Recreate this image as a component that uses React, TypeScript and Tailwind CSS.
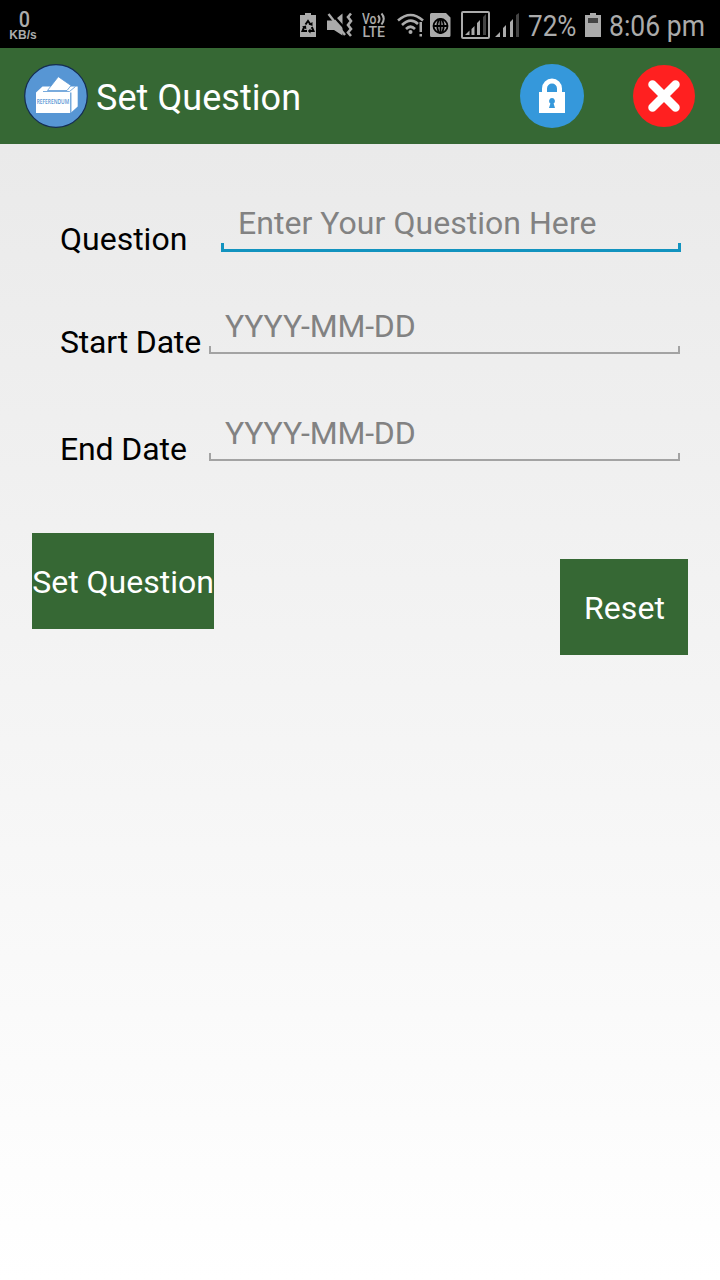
import { FC, ReactNode } from "react";

const BatterySaverIcon: FC = () => (
    <svg viewBox="0 0 16 48" className="h-12 w-4">
        <path d="M5 13h6v2h5v22H0V15h5z" fill="#ababab" />
        <g fill="none" stroke="#000" strokeWidth="2">
            <path d="M5.5 24.5L8 21l2.5 3.5" />
            <path d="M11.8 27l1.7 4H9.5" />
            <path d="M4.2 27l-1.7 4H7" />
        </g>
        <path d="M12.5 22v4l-4-1.5zM10.5 28.500v5L7.8 31zM2 26.500l4-1 .4 4z" fill="#000" />
    </svg>
);

const MuteIcon: FC = () => (
    <svg viewBox="0 0 26 48" className="h-12 w-[26px]">
        <path d="M0 20.500h7l8.500-7v22L7 30H0z" fill="#ababab" />
        <path d="M3.500 12.500L20 31" stroke="#000" strokeWidth="2.400" />
        <path d="M1.500 14L18 35" stroke="#ababab" strokeWidth="2.400" />
        <path d="M24 13.500l-3 3.500 3 4-3 4 3 4-3 3.500 3 3.500" fill="none" stroke="#ababab" strokeWidth="2.600" />
    </svg>
);

const VolteIcon: FC = () => (
    <svg viewBox="0 0 24 48" className="h-12 w-6">
        <g fill="#ababab" fontFamily="Roboto, sans-serif" fontWeight="500">
            <text x="0" y="23.500" fontSize="14" textLength="14.500" lengthAdjust="spacingAndGlyphs">Vo</text>
            <text x="0.500" y="36.500" fontSize="14" textLength="22.500" lengthAdjust="spacingAndGlyphs">LTE</text>
        </g>
        <path d="M16 15.500q3 3.500 0 7.500M19.500 13.500q4.500 5 0 11" fill="none" stroke="#ababab" strokeWidth="2" />
    </svg>
);

const WifiIcon: FC = () => (
    <svg viewBox="0 0 27 48" className="h-12 w-[27px]">
        <g fill="none" stroke="#ababab" strokeWidth="2.600">
            <path d="M1 20.500Q13.500 9.500 26 20.500" />
            <path d="M5 25Q13.500 17 21 24" />
            <path d="M9 29Q13.500 24.500 18 29" />
        </g>
        <circle cx="13.500" cy="32" r="2" fill="#ababab" />
        <path d="M22.500 22h2.500v10h-2.500zM22.500 34h2.500v2.500h-2.500z" fill="#ababab" />
    </svg>
);

const SimIcon: FC = () => (
    <svg viewBox="0 0 21 48" className="h-12 w-[21px]">
        <path d="M1.500 13H16l4.500 4.500V35.500a1.500 1.500 0 0 1-1.500 1.500H1.500A1.500 1.500 0 0 1 0 35.500V14.500A1.500 1.500 0 0 1 1.500 13z" fill="#ababab" />
        <g fill="none" stroke="#000" strokeWidth="1.800">
            <circle cx="10.500" cy="26" r="7" />
            <ellipse cx="10.500" cy="26" rx="3.200" ry="7" />
            <path d="M3.500 26h14M10.500 19v14" />
        </g>
    </svg>
);

const SignalBoxIcon: FC = () => (
    <svg viewBox="0 0 29 48" className="h-12 w-[29px]">
        <rect x="1" y="12" width="27" height="26" rx="1" fill="none" stroke="#ababab" strokeWidth="2" />
        <path d="M4 35l4.500-4.500V35zM10.500 29l3-3v9h-3zM16 23l3-3v15h-3z" fill="#ababab" />
        <path d="M22 17l3-3v21h-3z" fill="#444" />
    </svg>
);

const SignalIcon: FC = () => (
    <svg viewBox="0 0 25 48" className="h-12 w-[25px]">
        <path d="M0 37l5-5v5zM8 28l3-3v12H8zM15 22l3-3v18h-3z" fill="#ababab" />
        <path d="M21 15l3-2v24h-3z" fill="#444" />
    </svg>
);

const BatteryIcon: FC = () => (
    <svg viewBox="0 0 16 48" className="h-12 w-4">
        <path d="M5 13h6v2h5v22H0V15h5z" fill="#ababab" />
        <path d="M3 18h10v5H3z" fill="#444" />
    </svg>
);

const StatusBar: FC = () => (
    <div className="flex h-12 bg-black text-[#ababab]">
        <div className="ml-[9px] w-[30px] pt-[10px] text-center whitespace-nowrap">
            <div className="text-[22px] leading-[19px] font-medium"><span className="inline-block scale-x-90">0</span></div>
            <div className="-ml-0.5 font-['Liberation_Sans'] text-[12px] leading-[12px] font-bold">KB/s</div>
        </div>
        <div className="ml-[261px]"><BatterySaverIcon /></div>
        <div className="ml-[11px]"><MuteIcon /></div>
        <div className="ml-[9px]"><VolteIcon /></div>
        <div className="ml-[11px]"><WifiIcon /></div>
        <div className="ml-[6px]"><SimIcon /></div>
        <div className="ml-[10px]"><SignalBoxIcon /></div>
        <div className="ml-[5px]"><SignalIcon /></div>
        <div className="ml-[8px] w-[57px] pt-[6px] text-[30px] leading-10 whitespace-nowrap">
            <span className="inline-block origin-left scale-x-[0.87]">72%</span>
        </div>
        <BatteryIcon />
        <div className="ml-[8px] w-[96px] pt-[6px] text-[30px] leading-10 whitespace-nowrap">
            <span className="inline-block origin-left scale-x-[0.885]">8:06 pm</span>
        </div>
    </div>
);

const Logo: FC = () => (
    <svg viewBox="0 0 64 64" className="size-16">
        <circle cx="32" cy="32" r="31.300" fill="#5796d4" stroke="#142c52" strokeWidth="1.200" />
        <path d="M12 28.500l6.500-6H53.700V42.500L46.500 49H12z" fill="#fff" />
        <path d="M19 27.500h26.500l6-5" fill="none" stroke="#5796d4" strokeWidth="0.800" />
        <path d="M46.800 28.500V49" stroke="#5796d4" strokeWidth="1.200" />
        <path d="M23.500 26.500L34.300 12.700 47 21.500 43 26.500z" fill="#fff" stroke="#5796d4" strokeWidth="0.800" />
        <text x="12.700" y="40" fontSize="6.400" fontFamily="Open Sans, sans-serif" fontWeight="600" fill="#5796d4" textLength="32.500" lengthAdjust="spacingAndGlyphs">REFERENDUM</text>
    </svg>
);

const LockIcon: FC = () => (
    <svg viewBox="0 0 64 64" className="size-16">
        <circle cx="32" cy="32" r="32" fill="#3598db" />
        <path d="M24.500 30v-5.500a7.500 7.500 0 0 1 15 0V30" fill="none" stroke="#fff" strokeWidth="5" />
        <path d="M19 28h26v21H19z" fill="#fff" />
        <path d="M32 34a3 3 0 0 1 1.600 5.500L35 44h-6l1.400-4.500A3 3 0 0 1 32 34z" fill="#3598db" />
    </svg>
);

const CloseIcon: FC = () => (
    <svg viewBox="0 0 62 62" className="size-[62px]">
        <circle cx="31" cy="31" r="31" fill="#ff2020" />
        <path d="M19.500 19.500l23 23M42.500 19.500l-23 23" stroke="#fff" strokeWidth="8.500" strokeLinecap="round" />
    </svg>
);

const Header: FC = () => (
    <div className="flex h-24 items-center bg-[#366834] pr-[25px] pl-6 text-white">
        <Logo />
        <div className="ml-2 pt-[3px] text-[36px] leading-[44px] tracking-[0.06px]">Set Question</div>
        <div className="ml-auto flex items-center gap-[49px]">
            <LockIcon />
            <CloseIcon />
        </div>
    </div>
);

type FieldProps = {
    label: string;
    placeholder: string;
    labelClass: string;
    placeholderClass: string;
    lineClass: string;
    className: string;
};

const Field: FC<FieldProps> = ({ label, placeholder, labelClass, placeholderClass, lineClass, className }) => (
    <div className={`flex pl-[60px] ${className}`}>
        <div className={`shrink-0 pt-4 whitespace-nowrap ${labelClass}`}>{label}</div>
        <div className="flex-1">
            <div className={`text-[#828282] ${placeholderClass}`}>{placeholder}</div>
            <div className={lineClass} />
        </div>
    </div>
);

const FormButton: FC<{ className: string; children: ReactNode }> = ({ className, children }) => (
    <button className={`flex h-24 items-center justify-center bg-[#366834] pt-0.5 whitespace-nowrap text-white ${className}`}>
        {children}
    </button>
);

export default function App() {
    return (
        <div className="flex h-[1280px] w-[720px] flex-col overflow-hidden font-['Roboto',sans-serif]">
            <StatusBar />
            <Header />
            <div className="flex-1 bg-linear-to-b from-[#eaeaea] to-white pt-[59px] text-[32px] leading-10 text-black">
                <Field
                    label="Question"
                    placeholder="Enter Your Question Here"
                    labelClass="w-[161px]"
                    placeholderClass="pl-[17px] tracking-[0.04px]"
                    lineClass="h-[9px] border-x-3 border-b-3 border-[#1293bf]"
                    className="h-[103px] pr-[39px]"
                />
                <Field
                    label="Start Date"
                    placeholder="YYYY-MM-DD"
                    labelClass="w-[149px] tracking-[-0.18px]"
                    placeholderClass="pl-4 tracking-[-0.2px]"
                    lineClass="h-2 border-x-2 border-b-2 border-[#a3a3a3]"
                    className="h-[107px] pr-10"
                />
                <Field
                    label="End Date"
                    placeholder="YYYY-MM-DD"
                    labelClass="w-[149px] tracking-[-0.12px]"
                    placeholderClass="pl-4 tracking-[-0.2px]"
                    lineClass="h-2 border-x-2 border-b-2 border-[#a3a3a3]"
                    className="h-[120px] pr-10"
                />
                <div className="flex items-start justify-between px-8">
                    <FormButton className="w-[182px]">Set Question</FormButton>
                    <FormButton className="mt-[26px] w-32 pl-px tracking-[0.1px]">Reset</FormButton>
                </div>
            </div>
        </div>
    );
}
